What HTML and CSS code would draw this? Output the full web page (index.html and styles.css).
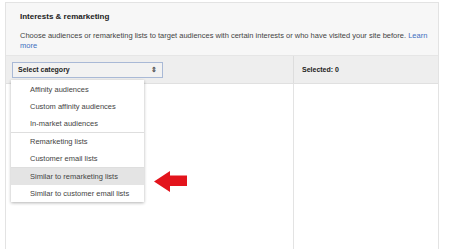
FILE: index.html
```html
<!DOCTYPE html>
<html lang="en">
<head>
    <meta charset="UTF-8">
    <meta name="viewport" content="width=device-width, initial-scale=1.0">
    <title>Interests &amp; remarketing</title>
    <link rel="stylesheet" href="styles.css">
</head>
<body>

    <div class="panel">
        <div class="panel-head">
            <h3>Interests &amp; remarketing</h3>
            <p>Choose audiences or remarketing lists to target audiences with certain interests or who have visited your site before. <a href="#">Learn more</a></p>
        </div>

        <div class="toolbar">
            <div class="tool-left">
                <div class="select">
                    <span>Select category</span>
                    <span class="arrows">&#8661;</span>
                </div>
            </div>
            <div class="tool-right">Selected: 0</div>
        </div>

        <div class="columns">
            <div class="col-left"></div>
            <div class="col-right"></div>
        </div>

        <ul class="menu">
            <li>Affinity audiences</li>
            <li>Custom affinity audiences</li>
            <li class="sep">In-market audiences</li>
            <li>Remarketing lists</li>
            <li class="sep">Customer email lists</li>
            <li class="active">Similar to remarketing lists</li>
            <li>Similar to customer email lists</li>
        </ul>

        <svg class="pointer" width="33" height="21" viewBox="0 0 33 21">
            <polygon points="0,10.5 16,0 16,4.5 33,4.5 33,15 16,15 16,21" fill="#e3141c"/>
        </svg>
    </div>

</body>
</html>
```

FILE: styles.css
```css
body {
    margin: 0;
    font-family: "Liberation Sans", Arial, sans-serif;
    background: white;
    color: #333;
}
.panel {
    position: relative;
    margin: 2px 0 0 5px;
    width: 432px;
    height: 260px;
    border: 1px solid #e3e3e3;
}
.panel-head {
    background: #f7f7f7;
    padding: 9px 8px 4px 14px;
}
.panel-head h3 {
    margin: 0 0 10px 0;
    font-size: 8px;
    color: #222;
}
.panel-head p {
    margin: 0;
    font-size: 7.5px;
    line-height: 10px;
    color: #444;
}
.panel-head a {
    color: #3d6fc0;
    text-decoration: none;
}
.toolbar {
    display: grid;
    grid-template-columns: 287px 1fr;
    height: 27px;
    background: #eeeeee;
    border-top: 1px solid #e6e6e6;
    border-bottom: 1px solid #e0e0e0;
}
.tool-left {
    display: flex;
    align-items: center;
    padding-left: 6px;
}
.select {
    display: flex;
    justify-content: space-between;
    align-items: center;
    width: 139px;
    height: 14px;
    padding: 0 5px;
    border: 1px solid #a9b9d6;
    background: #f2f2f2;
    font-size: 7px;
    font-weight: bold;
    color: #222;
}
.arrows {
    font-size: 7px;
    color: #555;
}
.tool-right {
    display: flex;
    align-items: center;
    padding-left: 8px;
    border-left: 1px solid #dddddd;
    font-size: 7px;
    font-weight: bold;
    color: #222;
}
.columns {
    display: grid;
    grid-template-columns: 287px 1fr;
    height: 180px;
}
.col-right {
    border-left: 1px solid #e3e3e3;
}
.menu {
    position: absolute;
    left: 5px;
    top: 77px;
    width: 133px;
    margin: 0;
    padding: 1px 0 0 0;
    list-style: none;
    background: white;
    box-shadow: 0 1px 3px rgba(0, 0, 0, 0.3);
}
.menu li {
    height: 17px;
    line-height: 17px;
    padding-left: 19px;
    font-size: 7.5px;
    color: #444;
}
.menu li.sep {
    border-bottom: 1px solid #dedede;
}
.menu li.active {
    background: #e4e4e4;
}
.pointer {
    position: absolute;
    left: 148px;
    top: 168px;
}
```
